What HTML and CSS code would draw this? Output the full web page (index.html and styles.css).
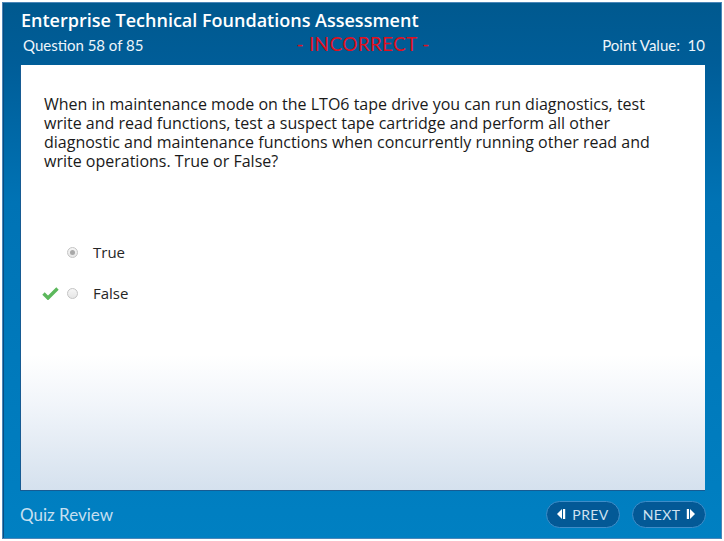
FILE: index.html
```html
<!DOCTYPE html>
<html>
<head>
<meta charset="utf-8">
<link rel="stylesheet" href="styles.css">
</head>
<body>
<div class="frame">
  <header class="head">
    <h1 class="title">Enterprise Technical Foundations Assessment</h1>
    <div class="meta">
      <span class="qnum">Question 58 of 85</span>
      <span class="status">- INCORRECT -</span>
      <span class="points">Point Value:&nbsp; 10</span>
    </div>
  </header>
  <main class="panel">
    <p class="question">When in maintenance mode on the LTO6 tape drive you can run diagnostics, test write and read functions, test a suspect tape cartridge and perform all other diagnostic and maintenance functions when concurrently running other read and write operations. True or False?</p>
    <ul class="options">
      <li class="option">
        <span class="mark"></span>
        <span class="radio checked"></span>
        <span class="label">True</span>
      </li>
      <li class="option">
        <span class="mark"><svg width="17" height="13" viewBox="0 0 17 13"><path d="M1.5 6.5 L6 11 L15.5 1.5" fill="none" stroke="#5cb85c" stroke-width="3.4" stroke-linejoin="miter"/></svg></span>
        <span class="radio"></span>
        <span class="label">False</span>
      </li>
    </ul>
  </main>
  <footer class="foot">
    <span class="review">Quiz Review</span>
    <div class="nav">
      <button class="btn"><svg width="9" height="10" viewBox="0 0 9 10"><path d="M5 0 L0 5 L5 10 Z" fill="#fff"/><rect x="6" y="0" width="2.2" height="10" fill="#fff"/></svg>PREV</button>
      <button class="btn">NEXT<svg width="9" height="10" viewBox="0 0 9 10"><rect x="0.8" y="0" width="2.2" height="10" fill="#fff"/><path d="M4 0 L9 5 L4 10 Z" fill="#fff"/></svg></button>
    </div>
  </footer>
</div>
</body>
</html>
```
FILE: styles.css
```css
html, body {
  margin: 0;
  padding: 0;
  background: #ffffff;
}
body {
  width: 724px;
  height: 541px;
  padding: 2px;
  box-sizing: border-box;
  font-family: "Open Sans", "Lato", sans-serif;
}
.frame {
  height: 100%;
  box-sizing: border-box;
  border: 1px solid #4a86b8;
  box-shadow: inset 1px 0 0 #0a4d80;
  background: linear-gradient(to bottom, #00598f 0px, #005d98 60px, #0073b5 200px, #0080c2 100%);
  display: flex;
  flex-direction: column;
  padding: 0 16px 0 17px;
}
.head {
  color: #fff;
  padding: 4px 0 0 1px;
}
.title {
  margin: 0;
  font-family: "Open Sans", sans-serif;
  font-weight: 600;
  font-size: 18px;
  line-height: 26px;
}
.meta {
  display: grid;
  grid-template-columns: 1fr auto 1fr;
  align-items: baseline;
  height: 22px;
  margin: -1px 0 11px 0;
}
.qnum, .points {
  font-family: "Lato", sans-serif;
  font-size: 15px;
  font-weight: 400;
  color: #eef5fb;
}
.qnum { padding-left: 2px; }
.points { text-align: right; }
.status {
  font-family: "Lato", sans-serif;
  color: #e0101e;
  font-size: 19px;
  letter-spacing: 0.3px;
}
.panel {
  flex: 1;
  background: linear-gradient(to bottom, #ffffff 0px, #ffffff 290px, #f1f5fa 340px, #d5e1ee 100%);
  border-left: 1px solid #175b93;
  border-bottom: 1px solid #175b93;
  padding: 30px 24px 0 23px;
}
.question {
  margin: 0;
  font-family: "Open Sans", sans-serif;
  font-size: 16px;
  line-height: 19px;
  color: #1a1a1a;
}
.options {
  list-style: none;
  margin: 71px 0 0 0;
  padding: 0;
  display: flex;
  flex-direction: column;
  gap: 21px;
}
.option {
  display: flex;
  align-items: center;
  height: 20px;
}
.mark {
  width: 20px;
  margin-left: -2px;
  margin-right: 5px;
  display: flex;
  align-items: center;
}
.radio {
  width: 11px;
  height: 11px;
  border-radius: 50%;
  border: 1px solid #c4c4c4;
  background: linear-gradient(#f6f6f6, #e6e6e6);
  box-sizing: border-box;
  position: relative;
  margin-right: 15px;
}
.radio.checked::after {
  content: "";
  position: absolute;
  left: 2px;
  top: 2px;
  width: 5px;
  height: 5px;
  border-radius: 50%;
  background: #a8a8a8;
}
.label {
  font-family: "Open Sans", sans-serif;
  font-size: 15px;
  color: #262626;
}
.foot {
  height: 47px;
  display: flex;
  align-items: center;
  justify-content: space-between;
  margin-right: -1px;
}
.review {
  font-family: "Lato", sans-serif;
  font-size: 17px;
  color: #c6dff0;
}
.nav {
  display: flex;
  gap: 12px;
  margin-top: -1px;
}
.btn {
  width: 74px;
  height: 27px;
  border-radius: 14px;
  border: 1px solid #3f8dc8;
  background: #035996;
  color: #cfe2f1;
  font-family: "Lato", sans-serif;
  font-weight: 400;
  font-size: 14px;
  letter-spacing: 0.4px;
  display: flex;
  align-items: center;
  justify-content: center;
  gap: 6px;
  padding: 0;
}
```
